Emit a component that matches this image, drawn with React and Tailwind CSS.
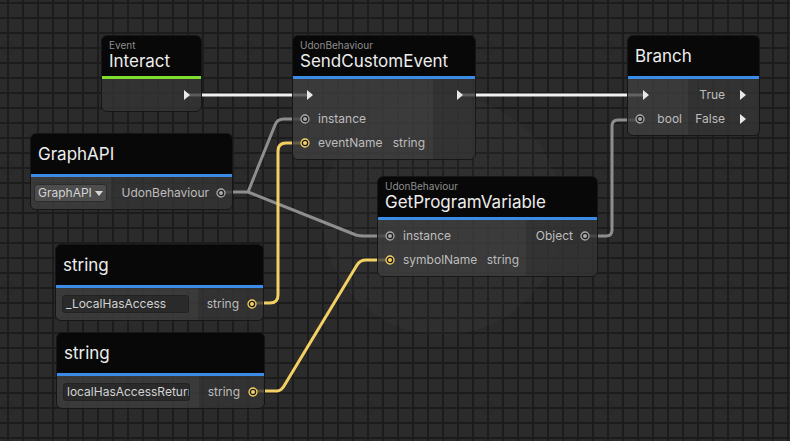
import React from 'react';

// Udon graph editor canvas: nodes sit on a free canvas, wires drawn in one SVG layer beneath them.

const FONT = { fontFamily: 'Inter, "Noto Sans", sans-serif' };

function FlowArrow() {
  return (
    <svg width="6" height="10" viewBox="0 0 6 10" className="shrink-0">
      <polygon points="0,0 6,5 0,10" fill="#e8e8e8" />
    </svg>
  );
}

function Socket({ color = 'gray' }) {
  const c = color === 'yellow' ? '#f4d064' : '#a9a9a9';
  return (
    <svg width="10" height="10" viewBox="0 0 10 10" className="shrink-0">
      <circle cx="5" cy="5" r="4" fill="#1e1e1e" stroke={c} strokeWidth="1.3" />
      <circle cx="5" cy="5" r="2" fill={c} />
    </svg>
  );
}

function Node({ className, subtitle, title, children }) {
  return (
    <div className={`absolute flex flex-col overflow-hidden rounded-[6px] border border-[#161616] ${className}`}>
      <div
        className={`flex h-[40px] flex-col bg-[#080808] px-[7px] ${subtitle ? 'pt-[3px]' : 'justify-center'}`}
      >
        {subtitle && <div className="text-[10px] leading-[12px] text-[#8e8e8e]">{subtitle}</div>}
        <div className="text-[17px] leading-[21px] text-[#ededed]">{title}</div>
      </div>
      <div className={`h-[3px] ${title === 'Interact' ? 'bg-[#7ddc2e]' : 'bg-[#3b8ce6]'}`} />
      <div className="flex flex-1">{children}</div>
    </div>
  );
}

const inCol = 'flex flex-col py-1 bg-[#3f3f3f]/80';
const outCol = 'flex flex-1 flex-col py-1 bg-[#343434]/80';
const row = 'flex h-6 items-center text-[12px] text-[#bdbdbd]';

export default function App() {
  return (
    <div
      style={FONT}
      className="relative h-[441px] w-[790px] overflow-hidden bg-[#2b2b2b] bg-[linear-gradient(to_right,#1c1c1c_2px,transparent_2px),linear-gradient(to_bottom,#1c1c1c_2px,transparent_2px)] bg-size-[15px_15px] bg-position-[7px_2px]"
    >
      {/* faint watermark behind everything */}
      <div className="absolute left-[322px] top-[95px] h-[240px] w-[240px] rounded-full bg-white/[0.025]" />
      <div className="absolute left-[2px] top-[64px] text-[34px] font-bold tracking-[2px] text-white/[0.025]">
        VRCHAT
      </div>

      {/* wires */}
      <svg className="absolute inset-0" width="790" height="441" fill="none">
        <path d="M186 95 H312" stroke="#f2f2f2" strokeWidth="3" />
        <path d="M460 95 H646" stroke="#f2f2f2" strokeWidth="3" />
        <path
          d="M220 192 H248 L275 125 Q277 119 284 119 H305"
          stroke="#8e8e8e"
          strokeWidth="3"
          strokeLinejoin="round"
        />
        <path
          d="M248 192 L356 235 Q359 236 364 236 H390"
          stroke="#8e8e8e"
          strokeWidth="3"
          strokeLinejoin="round"
        />
        <path
          d="M585 236 H606 Q612 236 612 230 V126 Q612 120 618 120 H640"
          stroke="#8e8e8e"
          strokeWidth="3"
        />
        <path
          d="M251 303 H270 Q278 303 278 295 V151 Q278 143 286 143 H305"
          stroke="#f4d064"
          strokeWidth="3"
        />
        <path
          d="M252 391 H277 Q281 391 284 386 L357 265 Q360 260 366 260 H390"
          stroke="#f4d064"
          strokeWidth="3"
        />
      </svg>

      {/* Interact */}
      <Node className="left-[101px] top-[35px] w-[101px]" subtitle="Event" title="Interact">
        <div className={`${outCol} items-end pr-[11px]`}>
          <div className={row}>
            <FlowArrow />
          </div>
        </div>
      </Node>

      {/* SendCustomEvent */}
      <Node className="left-[292px] top-[35px] w-[184px]" subtitle="UdonBehaviour" title="SendCustomEvent">
        <div className={`${inCol} w-[140px]`}>
          <div className={`${row} pl-[14px]`}>
            <FlowArrow />
          </div>
          <div className={`${row} gap-2 pl-[7px]`}>
            <Socket />
            <span>instance</span>
          </div>
          <div className={`${row} gap-2 pl-[7px] pr-2`}>
            <Socket color="yellow" />
            <span>eventName</span>
            <span className="ml-auto">string</span>
          </div>
        </div>
        <div className={`${outCol} items-end pr-[12px]`}>
          <div className={row}>
            <FlowArrow />
          </div>
        </div>
      </Node>

      {/* Branch */}
      <Node className="left-[627px] top-[35px] w-[133px]" title="Branch">
        <div className={`${inCol} w-[60px]`}>
          <div className={`${row} pl-[15px]`}>
            <FlowArrow />
          </div>
          <div className={`${row} pl-[7px] pr-[6px]`}>
            <Socket />
            <span className="ml-auto">bool</span>
          </div>
        </div>
        <div className={`${outCol} items-end pr-[13px]`}>
          <div className={`${row} gap-[15px]`}>
            <span>True</span>
            <FlowArrow />
          </div>
          <div className={`${row} gap-[15px]`}>
            <span>False</span>
            <FlowArrow />
          </div>
        </div>
      </Node>

      {/* GraphAPI */}
      <Node className="left-[30px] top-[133px] w-[203px]" title="GraphAPI">
        <div className={`${inCol} w-[80px] pl-[3px]`}>
          <div className={row}>
            <div className="flex h-[18px] w-[73px] items-center gap-[3px] rounded-[3px] border border-[#2c2c2c] bg-[#4d4d4d] pl-[3px] text-[#d4d4d4]">
              <span>GraphAPI</span>
              <svg width="8" height="5" viewBox="0 0 8 5">
                <polygon points="0,0 8,0 4,5" fill="#d8d8d8" />
              </svg>
            </div>
          </div>
        </div>
        <div className={`${outCol} items-end pr-[6px]`}>
          <div className={`${row} gap-[7px]`}>
            <span>UdonBehaviour</span>
            <Socket />
          </div>
        </div>
      </Node>

      {/* GetProgramVariable */}
      <Node className="left-[377px] top-[176px] w-[221px]" subtitle="UdonBehaviour" title="GetProgramVariable">
        <div className={`${inCol} w-[148px]`}>
          <div className={`${row} gap-2 pl-[7px]`}>
            <Socket />
            <span>instance</span>
          </div>
          <div className={`${row} gap-2 pl-[7px] pr-[7px]`}>
            <Socket color="yellow" />
            <span>symbolName</span>
            <span className="ml-auto">string</span>
          </div>
        </div>
        <div className={`${outCol} items-end pr-[7px]`}>
          <div className={`${row} gap-[7px]`}>
            <span>Object</span>
            <Socket />
          </div>
        </div>
      </Node>

      {/* string constants */}
      {[
        { pos: 'left-[55px] top-[244px]', value: '_LocalHasAccess' },
        { pos: 'left-[56px] top-[332px]', value: 'localHasAccessReturn' },
      ].map((n) => (
        <Node key={n.value} className={`${n.pos} w-[209px]`} title="string">
          <div className={`${inCol} w-[142px] pl-[6px]`}>
            <div className={row}>
              <div className="flex h-[18px] w-[127px] items-center overflow-hidden whitespace-nowrap rounded-[3px] border border-[#222] bg-[#2a2a2a] pl-[3px] text-[12px] text-[#d2d2d2]">
                {n.value}
              </div>
            </div>
          </div>
          <div className={`${outCol} items-end pr-[6px]`}>
            <div className={`${row} gap-2`}>
              <span>string</span>
              <Socket color="yellow" />
            </div>
          </div>
        </Node>
      ))}
    </div>
  );
}
